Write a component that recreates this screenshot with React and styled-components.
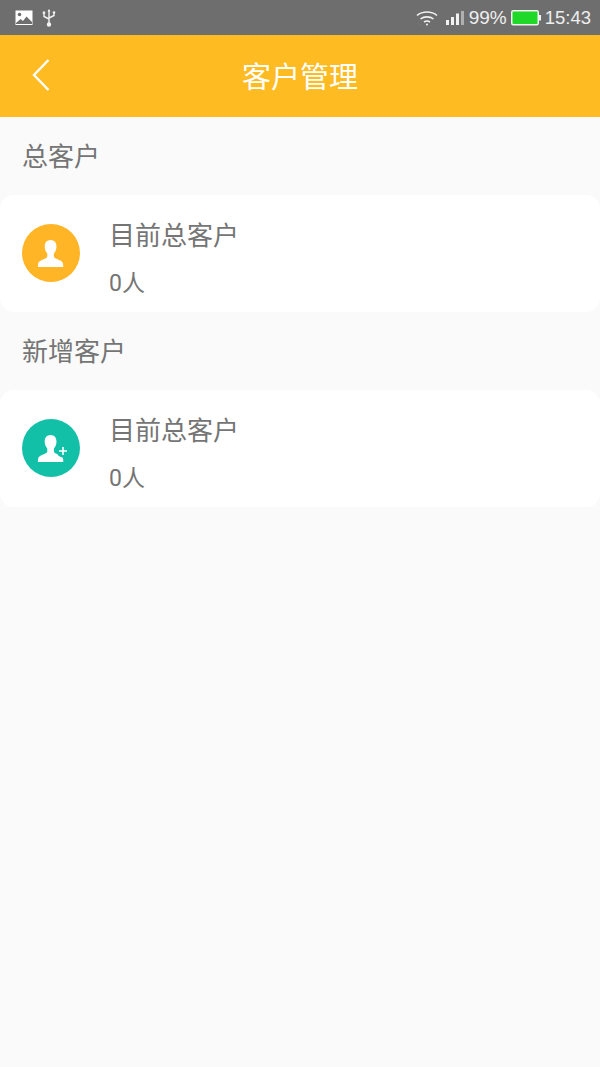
import React from "react";
import styled, { createGlobalStyle } from "styled-components";

const Global = createGlobalStyle`
  html, body { margin: 0; padding: 0; background: #fafafa; }
  body { font-family: "Roboto", "Noto Sans CJK SC", sans-serif; }
`;

const Page = styled.div`
  width: 600px;
  height: 1067px;
  background: #fafafa;
  overflow: hidden;
  display: flex;
  flex-direction: column;
`;

const StatusBar = styled.div`
  height: 35px;
  flex: none;
  box-sizing: border-box;
  background: #6e6e6e;
  display: flex;
  align-items: center;
  justify-content: space-between;
  padding: 0 9px 0 15px;
`;

const StatusGroup = styled.div`
  display: flex;
  align-items: center;
  gap: ${(p) => p.$gap}px;
`;

const StatusText = styled.span`
  font-family: "Liberation Sans", sans-serif;
  font-size: ${(p) => p.$size}px;
  line-height: 35px;
  color: #eeeeee;
`;

const SignalIcon = styled.svg`
  margin-left: 3px;
`;

const Header = styled.header`
  height: 82px;
  flex: none;
  box-sizing: border-box;
  padding-bottom: 2px;
  background: #ffbb22;
  display: flex;
  align-items: center;
  justify-content: center;
  position: relative;
`;

const Back = styled.svg`
  position: absolute;
  left: 31px;
  top: 23px;
`;

const Title = styled.h1`
  margin: 0;
  font-size: 29px;
  font-weight: 400;
  color: #fff;
`;

const SectionTitle = styled.div`
  height: 78px;
  box-sizing: border-box;
  padding: 25px 0 0 22px;
  font-size: 26px;
  line-height: 30px;
  color: #757575;
`;

const Card = styled.section`
  height: 117px;
  flex: none;
  background: #fff;
  border-radius: 14px;
  display: flex;
  align-items: flex-start;
`;

const Avatar = styled.div`
  width: 58px;
  height: 58px;
  margin: 29px 0 0 22px;
  border-radius: 50%;
  background: ${(p) => p.$color};
  display: flex;
  align-items: center;
  justify-content: center;
  flex: none;
`;

const Info = styled.div`
  margin-left: 29px;
  display: flex;
  flex-direction: column;
  color: #757575;
`;

const Name = styled.div`
  margin-top: 24px;
  font-size: 26px;
  line-height: 34px;
`;

const Count = styled.div`
  margin-top: 16px;
  font-size: 23px;
  line-height: 30px;
`;

const Person = ({ plus }) => (
  <svg width="58" height="58" viewBox="0 0 58 58">
    <path
      fill="#fff"
      d="M28.500 16c-3.600 0-5.800 2.800-5.800 6.500 0 2.800 1 5.400 2.600 7v2.700c0 1.300-1.300 2.100-3.600 3-2.300.9-4.700 1.800-5.400 3.800-.3.9-.4 2.200-.4 3.900.1.100.1.100.2.100h25c.1 0 .1 0 .2-.1 0-1.700-.1-3-.4-3.900-.7-2-3.100-2.900-5.400-3.800-2.300-.9-3.600-1.700-3.600-3v-2.700c1.600-1.600 2.600-4.200 2.600-7 0-3.700-2.200-6.500-5.900-6.500z"
    />
    {plus && <circle cx="41" cy="32" r="6.500" fill="#12c0a8" />}
    {plus && <path stroke="#fff" strokeWidth="1.600" d="M41 28v8M37 32h8" />}
  </svg>
);

const Entry = ({ color, plus }) => (
  <Card>
    <Avatar $color={color}><Person plus={plus} /></Avatar>
    <Info>
      <Name>目前总客户</Name>
      <Count>0人</Count>
    </Info>
  </Card>
);

export default function App() {
  return (
    <Page>
      <Global />
      <StatusBar>
        <StatusGroup $gap={9}>
          <svg width="18" height="16" viewBox="0 0 18 16">
            <rect x="0.500" y="0.500" width="17" height="14.500" fill="#fff" />
            <circle cx="4.500" cy="4.500" r="1.800" fill="#6e6e6e" />
            <path fill="#6e6e6e" d="M1 13l4.500-4 2.500 2 3.500-4.500L17 12v2H1z" />
          </svg>
          <svg width="14" height="18" viewBox="0 0 14 18" fill="none" stroke="#f2f2f2" strokeWidth="1.400">
            <path d="M7 1v15M2 4v3.500L7 10M12 4v2.500L7 9" />
            <circle cx="7" cy="15.500" r="1.500" fill="#f2f2f2" />
            <path d="M7 0l-1.500 2.500h3z" fill="#f2f2f2" stroke="none" />
            <rect x="0.800" y="2.500" width="2.400" height="2.400" fill="#f2f2f2" stroke="none" />
            <circle cx="12" cy="3.500" r="1.300" fill="#f2f2f2" stroke="none" />
          </svg>
        </StatusGroup>
        <StatusGroup $gap={4}>
          <svg width="22" height="16" viewBox="0 0 22 16" fill="none" stroke="#f2f2f2" strokeWidth="1.600">
            <path d="M1 5.500C6.500.8 15.500.8 21 5.500M4.500 9c3.500-2.800 9.500-2.800 13 0M8 12c1.800-1.200 4.200-1.200 6 0" />
            <path d="M2 13.500h.1M4.500 14.500h.1" strokeWidth="1" />
            <circle cx="11" cy="14.500" r="1" fill="#f2f2f2" stroke="none" />
          </svg>
          <SignalIcon width="20" height="16" viewBox="0 0 20 16">
            <rect x="1" y="10" width="3" height="5" fill="#f2f2f2" />
            <rect x="6" y="7" width="3" height="8" fill="#f2f2f2" />
            <rect x="11" y="3.500" width="3" height="11.500" fill="#f2f2f2" />
            <rect x="16" y="1" width="3" height="14" fill="#b0b0b0" />
          </SignalIcon>
          <StatusText $size={19}>99%</StatusText>
          <svg width="30" height="16" viewBox="0 0 30 16">
            <rect x="0.750" y="0.750" width="26.500" height="14" rx="1.500" fill="#1fd828" stroke="#f2f2f2" strokeWidth="1.500" />
            <rect x="28" y="5" width="2" height="5.500" fill="#f2f2f2" />
          </svg>
          <StatusText $size={18.5}>15:43</StatusText>
        </StatusGroup>
      </StatusBar>
      <Header>
        <Back width="20" height="34" viewBox="0 0 20 34" fill="none" stroke="#fff" strokeWidth="2.400">
          <path d="M17.500 2L3 17l14.500 15" />
        </Back>
        <Title>客户管理</Title>
      </Header>
      <SectionTitle>总客户</SectionTitle>
      <Entry color="#ffb526" />
      <SectionTitle>新增客户</SectionTitle>
      <Entry color="#12c0a8" plus />
    </Page>
  );
}
